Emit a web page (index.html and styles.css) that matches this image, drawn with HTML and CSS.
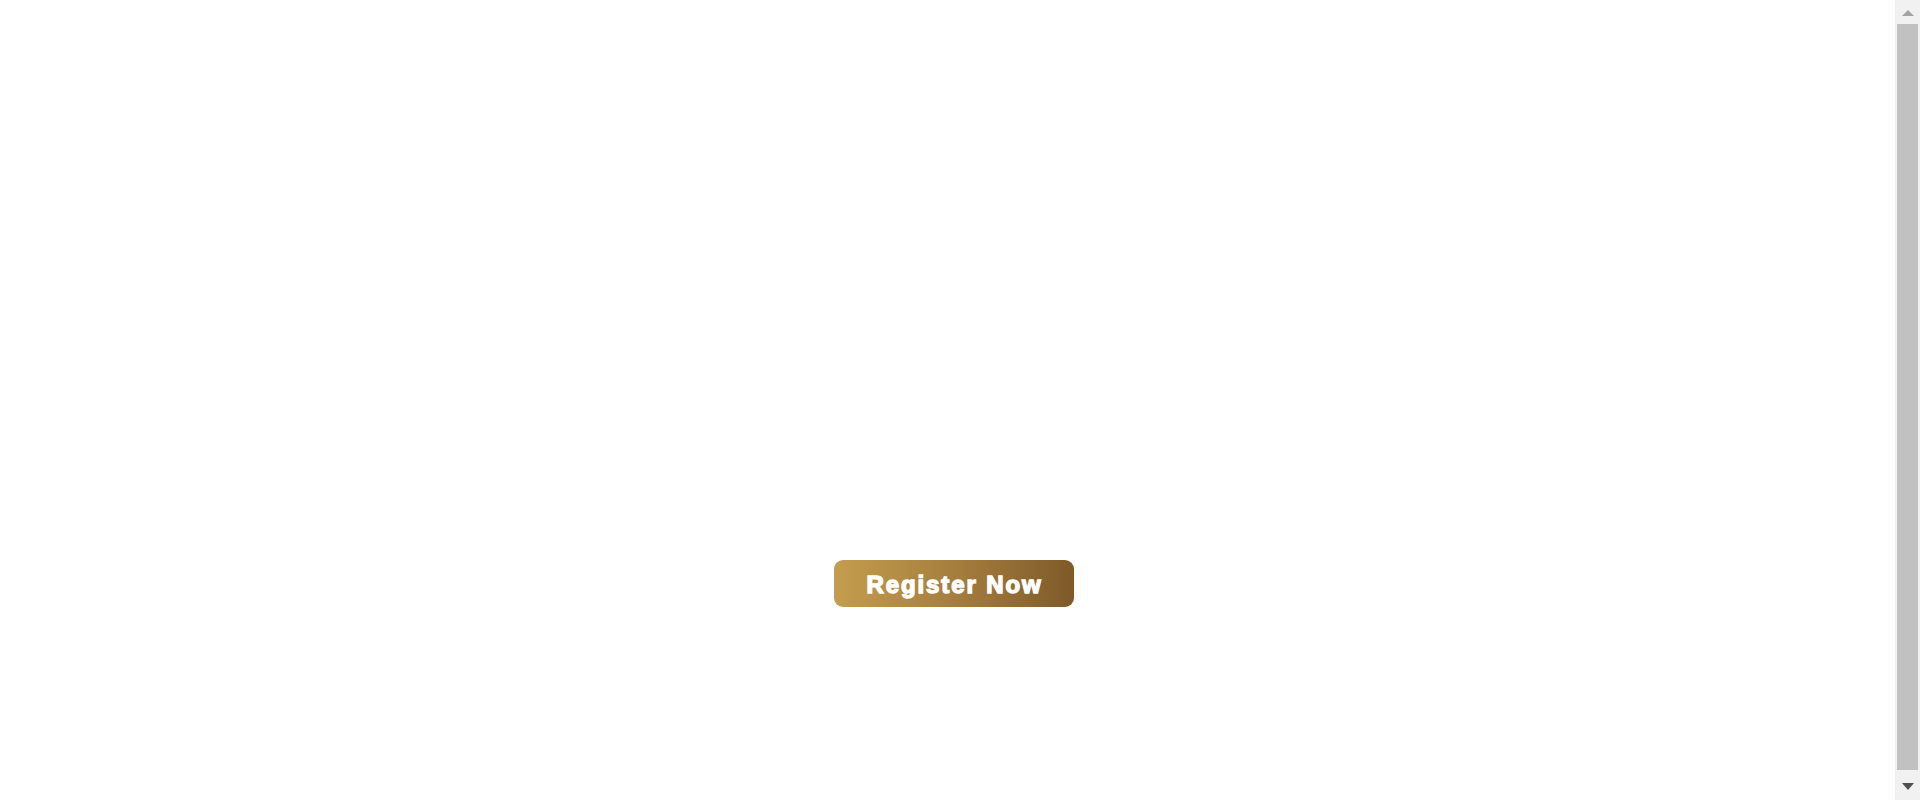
FILE: index.html
```html
<!DOCTYPE html>
<html lang="en">
<head>
<meta charset="utf-8">
<title>Register</title>
<link rel="stylesheet" href="styles.css">
</head>
<body>
<div class="window">
  <main class="hero">
    <a class="register-btn" href="#">Register Now</a>
  </main>
  <div class="scrollbar" aria-hidden="true">
    <div class="arrow arrow-up"></div>
    <div class="track"><div class="thumb"></div></div>
    <div class="arrow arrow-down"></div>
  </div>
</div>
</body>
</html>
```
FILE: styles.css
```css
html, body {
  margin: 0;
  padding: 0;
  background: #ffffff;
  overflow: hidden;
}
.window {
  display: flex;
  height: 800px;
}
.hero {
  flex: 1;
  box-sizing: border-box;
  padding-top: 560px;
  padding-left: 13px;
  display: flex;
  justify-content: center;
  align-items: flex-start;
}
.register-btn {
  display: flex;
  align-items: center;
  justify-content: center;
  width: 240px;
  height: 47px;
  padding-top: 2px;
  padding-left: 1px;
  box-sizing: border-box;
  border-radius: 9px;
  background: linear-gradient(90deg, #c49d4e 0%, #a57e3e 50%, #7e5a2a 100%);
  color: #ffffff;
  text-decoration: none;
  font-family: "Liberation Sans", Arial, sans-serif;
  font-weight: 700;
  font-size: 24px;
  letter-spacing: 1.9px;
  -webkit-text-stroke: 1.4px #ffffff;
}
.scrollbar {
  width: 25px;
  background: #f1f1f1;
  display: flex;
  flex-direction: column;
  align-items: center;
}
.arrow {
  width: 0;
  height: 0;
  border-left: 6px solid transparent;
  border-right: 6px solid transparent;
}
.arrow-up {
  margin-top: 10px;
  border-bottom: 6px solid #a3a3a3;
}
.arrow-down {
  margin-bottom: 10px;
  border-top: 7px solid #505050;
}
.track {
  flex: 1;
  align-self: stretch;
  padding: 8px 2px 13px 2px;
  display: flex;
}
.thumb {
  flex: 1;
  background: #c1c1c1;
}
```
